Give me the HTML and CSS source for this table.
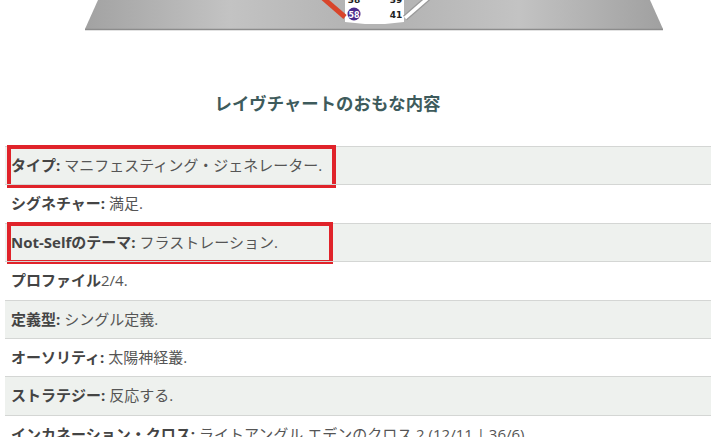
FILE: index.html
```html
<!DOCTYPE html>
<html lang="ja">
<head>
    <meta charset="UTF-8">
    <title>レイヴチャートのおもな内容</title>
    <link rel="stylesheet" href="styles.css">
</head>
<body>
    <div class="chart">
        <svg width="717" height="32" viewBox="0 0 717 32">
            <defs>
                <linearGradient id="base" x1="85" y1="0" x2="663" y2="0" gradientUnits="userSpaceOnUse">
                    <stop offset="0" stop-color="#a2a2a2"/>
                    <stop offset="0.25" stop-color="#c3c3c3"/>
                    <stop offset="0.45" stop-color="#b4b4b4"/>
                    <stop offset="0.55" stop-color="#b4b4b4"/>
                    <stop offset="0.75" stop-color="#c3c3c3"/>
                    <stop offset="1" stop-color="#a0a0a0"/>
                </linearGradient>
            </defs>
            <polygon points="98,0 650,0 663,29 85,29" fill="url(#base)"/>
            <line x1="85" y1="29.5" x2="663" y2="29.5" stroke="#8c8c8c" stroke-width="1.5"/>
            <!-- 中央のゲート部分 -->
            <polygon points="345,0 404,0 404,22 385,24 365,24 345,22" fill="#fff"/>
            <line x1="323" y1="-2" x2="345" y2="17" stroke="#d8452b" stroke-width="5"/>
            <line x1="428" y1="-2" x2="405" y2="18" stroke="#9a9a9a" stroke-width="6"/>
            <line x1="428" y1="-2" x2="405" y2="18" stroke="#fff" stroke-width="3.5"/>
            <circle cx="354" cy="14" r="6.5" fill="#4a2b8c"/>
            <text x="354" y="17.5" class="gate light" text-anchor="middle">58</text>
            <text x="354" y="3" class="gate" text-anchor="middle">38</text>
            <text x="396" y="3" class="gate" text-anchor="middle">39</text>
            <text x="396" y="18" class="gate" text-anchor="middle">41</text>
        </svg>
    </div>

    <h2 class="title">レイヴチャートのおもな内容</h2>

    <div class="summary">
        <div class="row shade">
            <b>タイプ:</b> マニフェスティング・ジェネレーター.
            <span class="mark mark-type"></span>
        </div>
        <div class="row"><b>シグネチャー:</b> 満足.</div>
        <div class="row shade">
            <b>Not-Selfのテーマ:</b> フラストレーション.
            <span class="mark mark-notself"></span>
        </div>
        <div class="row"><b>プロファイル</b>2/4.</div>
        <div class="row shade"><b>定義型:</b> シングル定義.</div>
        <div class="row"><b>オーソリティ:</b> 太陽神経叢.</div>
        <div class="row shade"><b>ストラテジー:</b> 反応する.</div>
        <div class="row"><b>インカネーション・クロス:</b> ライトアングル エデンのクロス 2 (12/11 | 36/6)</div>
    </div>
</body>
</html>
```

FILE: styles.css
```css
body {
    margin: 0;
    padding: 0;
    background: #fff;
    font-family: 'Open Sans', 'Noto Sans CJK JP', sans-serif;
    overflow: hidden;
}

.chart svg {
    display: block;
}

.gate {
    font-family: 'DejaVu Sans', sans-serif;
    font-size: 9px;
    font-weight: bold;
    fill: #222;
}

.gate.light {
    fill: #fff;
    font-size: 8px;
}

.title {
    margin: 59px 0 0;
    padding-right: 62px;
    text-align: center;
    font-size: 17.4px;
    font-weight: bold;
    color: #3e5b5c;
    line-height: 24px;
}

.summary {
    margin: 31px 6px 0 5px;
}

.row {
    position: relative;
    padding: 8px 6px;
    line-height: 21.4px;
    border-top: 1px solid #d4d6d4;
    font-size: 15px;
    color: #555;
}

.row b {
    color: #444;
}

.shade {
    background: #eef1ee;
}

.mark {
    position: absolute;
    left: 2px;
    border: 4px solid #e0232a;
}

.mark-type {
    top: -2px;
    width: 321px;
    height: 35px;
}

.mark-notself {
    top: -2px;
    width: 318px;
    height: 34px;
}
```
